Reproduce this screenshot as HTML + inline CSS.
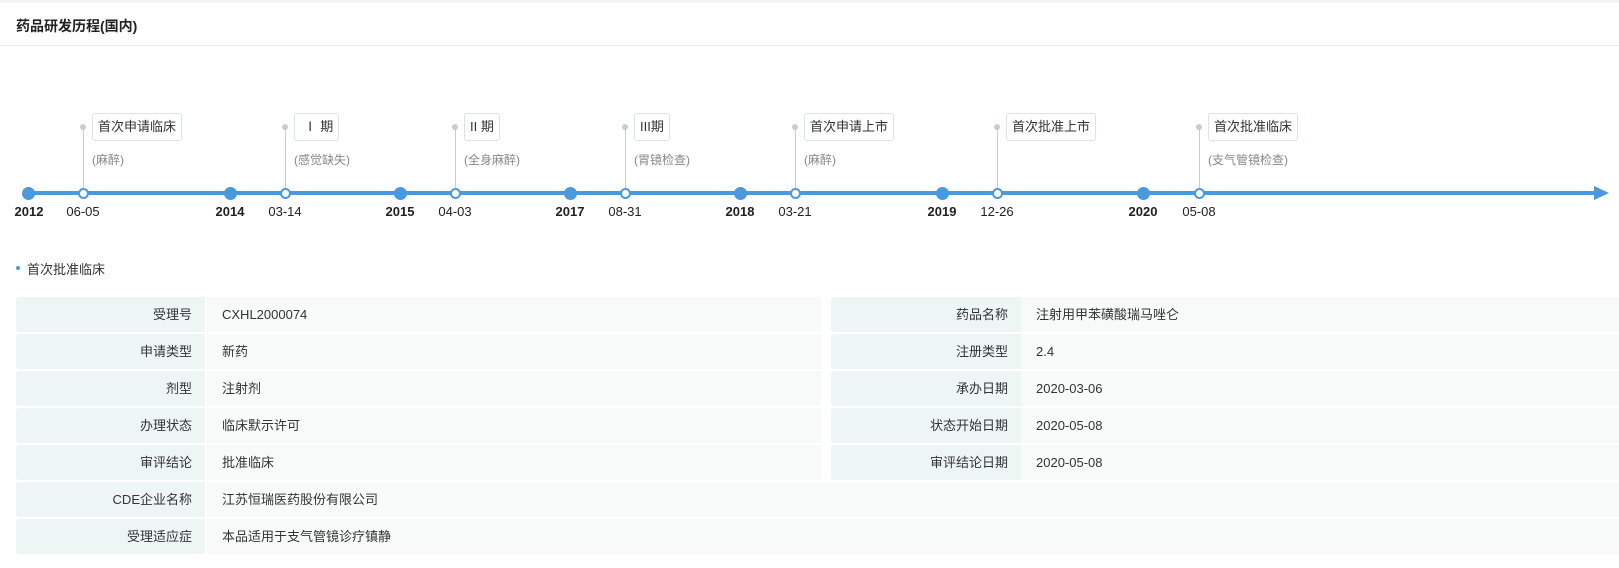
<!DOCTYPE html>
<html><head><meta charset="utf-8"><style>
*{margin:0;padding:0;box-sizing:border-box}
body{width:1619px;height:568px;background:#fff;font-family:"Liberation Sans","Noto Sans CJK SC",sans-serif;position:relative;overflow:hidden;color:#333}
.abs{position:absolute}
.top{left:0;top:0;width:1619px;height:3px;background:#f2f3f5}
.title{left:16px;top:16px;font-size:14px;font-weight:bold;color:#222}
.hr{left:0;top:45px;width:1619px;height:1px;background:#e6e8eb}
.line{left:28px;top:191px;width:1570px;height:4px;background:#4a99de}
.arrow{left:1594px;top:186px;width:0;height:0;border-top:7px solid transparent;border-bottom:7px solid transparent;border-left:15px solid #4a99de}
.fd{width:13px;height:13px;border-radius:50%;background:#4a99de;top:187px}
.hd{width:11px;height:11px;border-radius:50%;background:#fff;border:2.5px solid #4a99de;top:188px}
.vl{width:1px;background:#ccc;top:127px;height:62px}
.gd{width:6px;height:6px;border-radius:50%;background:#ccc;top:124px}
.box{top:113px;height:28px;border:1px solid #d9e3ec;border-radius:3px;font-size:13px;line-height:26px;padding:0 5px;color:#333;background:#fff;white-space:nowrap}
.sub{top:151px;font-size:12px;color:#888;white-space:nowrap}
.yr{top:204px;font-size:13px;font-weight:bold;color:#222;width:50px;text-align:center}
.dt{top:204px;font-size:13px;color:#222;width:50px;text-align:center}
.sec{left:27px;top:259px;font-size:13px;color:#333}
.bul{left:16px;top:266px;width:4px;height:4px;border-radius:50%;background:#4a99de}
.lc{background:#edf5f5;height:35px;font-size:13px;line-height:35px;text-align:right;padding-right:13px;border-radius:3px 0 0 3px}
.vc{background:#f8fafa;height:35px;font-size:13px;line-height:35px;padding-left:15px}
</style></head><body>
<div class="abs top"></div>
<div class="abs title">药品研发历程(国内)</div>
<div class="abs hr"></div>

<div class="abs line"></div>
<div class="abs arrow"></div>

<div class="abs fd" style="left:22px"></div>
<div class="abs fd" style="left:224px"></div>
<div class="abs fd" style="left:394px"></div>
<div class="abs fd" style="left:564px"></div>
<div class="abs fd" style="left:734px"></div>
<div class="abs fd" style="left:936px"></div>
<div class="abs fd" style="left:1137px"></div>

<div class="abs yr" style="left:4px">2012</div>
<div class="abs yr" style="left:205px">2014</div>
<div class="abs yr" style="left:375px">2015</div>
<div class="abs yr" style="left:545px">2017</div>
<div class="abs yr" style="left:715px">2018</div>
<div class="abs yr" style="left:917px">2019</div>
<div class="abs yr" style="left:1118px">2020</div>

<!-- events -->
<div class="abs vl" style="left:83px"></div><div class="abs gd" style="left:80px"></div>
<div class="abs box" style="left:92px">首次申请临床</div><div class="abs sub" style="left:92px">(麻醉)</div>
<div class="abs hd" style="left:78px"></div><div class="abs dt" style="left:58px">06-05</div>

<div class="abs vl" style="left:285px"></div><div class="abs gd" style="left:282px"></div>
<div class="abs box" style="left:294px">&nbsp;Ⅰ 期</div><div class="abs sub" style="left:294px">(感觉缺失)</div>
<div class="abs hd" style="left:280px"></div><div class="abs dt" style="left:260px">03-14</div>

<div class="abs vl" style="left:455px"></div><div class="abs gd" style="left:452px"></div>
<div class="abs box" style="left:464px">II 期</div><div class="abs sub" style="left:464px">(全身麻醉)</div>
<div class="abs hd" style="left:450px"></div><div class="abs dt" style="left:430px">04-03</div>

<div class="abs vl" style="left:625px"></div><div class="abs gd" style="left:622px"></div>
<div class="abs box" style="left:634px">III期</div><div class="abs sub" style="left:634px">(胃镜检查)</div>
<div class="abs hd" style="left:620px"></div><div class="abs dt" style="left:600px">08-31</div>

<div class="abs vl" style="left:795px"></div><div class="abs gd" style="left:792px"></div>
<div class="abs box" style="left:804px">首次申请上市</div><div class="abs sub" style="left:804px">(麻醉)</div>
<div class="abs hd" style="left:790px"></div><div class="abs dt" style="left:770px">03-21</div>

<div class="abs vl" style="left:997px"></div><div class="abs gd" style="left:994px"></div>
<div class="abs box" style="left:1006px">首次批准上市</div>
<div class="abs hd" style="left:992px"></div><div class="abs dt" style="left:972px">12-26</div>

<div class="abs vl" style="left:1199px"></div><div class="abs gd" style="left:1196px"></div>
<div class="abs box" style="left:1208px">首次批准临床</div><div class="abs sub" style="left:1208px">(支气管镜检查)</div>
<div class="abs hd" style="left:1194px"></div><div class="abs dt" style="left:1174px">05-08</div>

<div class="abs bul"></div>
<div class="abs sec">首次批准临床</div>

<!-- table -->
<div class="abs lc" style="left:16px;top:297px;width:189px">受理号</div>
<div class="abs vc" style="left:207px;top:297px;width:614px">CXHL2000074</div>
<div class="abs lc" style="left:831px;top:297px;width:190px">药品名称</div>
<div class="abs vc" style="left:1021px;top:297px;width:598px">注射用甲苯磺酸瑞马唑仑</div>

<div class="abs lc" style="left:16px;top:334px;width:189px">申请类型</div>
<div class="abs vc" style="left:207px;top:334px;width:614px">新药</div>
<div class="abs lc" style="left:831px;top:334px;width:190px">注册类型</div>
<div class="abs vc" style="left:1021px;top:334px;width:598px">2.4</div>

<div class="abs lc" style="left:16px;top:371px;width:189px">剂型</div>
<div class="abs vc" style="left:207px;top:371px;width:614px">注射剂</div>
<div class="abs lc" style="left:831px;top:371px;width:190px">承办日期</div>
<div class="abs vc" style="left:1021px;top:371px;width:598px">2020-03-06</div>

<div class="abs lc" style="left:16px;top:408px;width:189px">办理状态</div>
<div class="abs vc" style="left:207px;top:408px;width:614px">临床默示许可</div>
<div class="abs lc" style="left:831px;top:408px;width:190px">状态开始日期</div>
<div class="abs vc" style="left:1021px;top:408px;width:598px">2020-05-08</div>

<div class="abs lc" style="left:16px;top:445px;width:189px">审评结论</div>
<div class="abs vc" style="left:207px;top:445px;width:614px">批准临床</div>
<div class="abs lc" style="left:831px;top:445px;width:190px">审评结论日期</div>
<div class="abs vc" style="left:1021px;top:445px;width:598px">2020-05-08</div>

<div class="abs lc" style="left:16px;top:482px;width:189px">CDE企业名称</div>
<div class="abs vc" style="left:207px;top:482px;width:1412px">江苏恒瑞医药股份有限公司</div>

<div class="abs lc" style="left:16px;top:519px;width:189px">受理适应症</div>
<div class="abs vc" style="left:207px;top:519px;width:1412px">本品适用于支气管镜诊疗镇静</div>
</body></html>
